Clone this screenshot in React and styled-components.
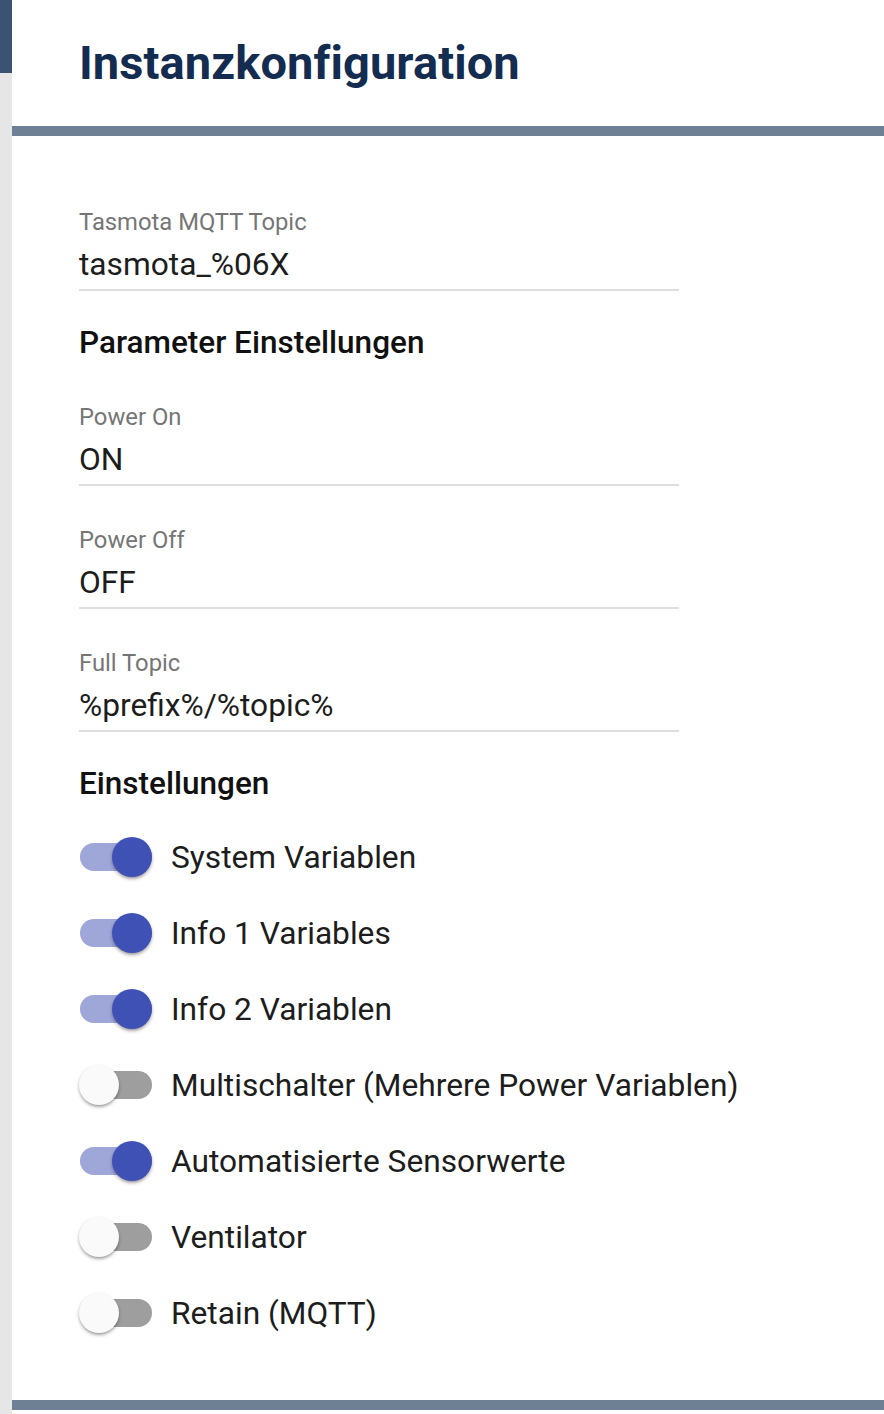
import React from 'react'
import styled, { createGlobalStyle } from 'styled-components'

const GlobalStyle = createGlobalStyle`
  html, body {
    margin: 0;
    padding: 0;
    background: #ffffff;
  }
  body {
    font-family: Roboto, "Liberation Sans", sans-serif;
  }
`

const fields = [
  { label: 'Tasmota MQTT Topic', value: 'tasmota_%06X' },
]

const params = [
  { label: 'Power On', value: 'ON' },
  { label: 'Power Off', value: 'OFF' },
  { label: 'Full Topic', value: '%prefix%/%topic%' },
]

const switches = [
  { text: 'System Variablen', on: true },
  { text: 'Info 1 Variables', on: true },
  { text: 'Info 2 Variablen', on: true },
  { text: 'Multischalter (Mehrere Power Variablen)', on: false },
  { text: 'Automatisierte Sensorwerte', on: true },
  { text: 'Ventilator', on: false },
  { text: 'Retain (MQTT)', on: false },
]

const Page = styled.div`
  display: grid;
  grid-template-columns: 12px 1fr;
  width: 884px;
  height: 1414px;
  overflow: hidden;
`

const Rail = styled.div`
  background: #e6e6e6;
  display: flex;
  flex-direction: column;
`

const RailThumb = styled.div`
  height: 73px;
  background: #3c5272;
`

const Main = styled.div`
  display: flex;
  flex-direction: column;
`

const Header = styled.header`
  height: 126px;
  padding-left: 67px;
  display: flex;
  align-items: center;
  border-bottom: 10px solid #6e8094;
`

const Title = styled.h1`
  margin: 0 0 2px;
  font-size: 47px;
  font-weight: 700;
  color: #132c4f;
  letter-spacing: 0.1px;
`

const Content = styled.div`
  padding: 32px 0 0 67px;
  display: flex;
  flex-direction: column;
  flex: 1;
`

const Field = styled.div`
  width: 600px;
  margin-top: 40px;
  display: flex;
  flex-direction: column;
`

const Label = styled.label`
  font-size: 23.8px;
  line-height: 28px;
  color: #767676;
`

const Value = styled.div`
  margin-top: 4px;
  height: 49px;
  line-height: 50px;
  font-size: 31.7px;
  color: #1d1d1d;
  border-bottom: 2px solid #dedede;
`

const Heading = styled.h2`
  margin: 32px 0 0;
  font-size: 31.5px;
  line-height: 40px;
  font-weight: 500;
  color: #111111;
`

const SwitchList = styled.div`
  margin-top: 15px;
  display: flex;
  flex-direction: column;
`

const SwitchRow = styled.div`
  height: 76px;
  display: flex;
  align-items: center;
  gap: 19px;
`

const Track = styled.span`
  position: relative;
  width: 72px;
  height: 28px;
  margin-left: 1px;
  border-radius: 14px;
  background: ${(p) => (p.$on ? '#9fa6d8' : '#9e9e9e')};
  flex-shrink: 0;
`

const Thumb = styled.span`
  position: absolute;
  top: -6px;
  left: ${(p) => (p.$on ? '32px' : '-1px')};
  width: 40px;
  height: 40px;
  border-radius: 50%;
  background: ${(p) => (p.$on ? '#3f51b5' : '#fafafa')};
  box-shadow: 0 2px 3px rgba(0, 0, 0, 0.2), 0 2px 4px rgba(0, 0, 0, 0.14),
    0 3px 2px -2px rgba(0, 0, 0, 0.12);
`

const SwitchText = styled.span`
  font-size: 31.7px;
  color: #1d1d1d;
`

const BottomBar = styled.div`
  margin-top: auto;
  margin-bottom: 4px;
  height: 10px;
  background: #6e8094;
`

const InputField = ({ label, value }) => (
  <Field>
    <Label>{label}</Label>
    <Value>{value}</Value>
  </Field>
)

const Toggle = ({ text, on }) => (
  <SwitchRow>
    <Track $on={on}>
      <Thumb $on={on} />
    </Track>
    <SwitchText>{text}</SwitchText>
  </SwitchRow>
)

const App = () => (
  <>
    <GlobalStyle />
    <Page>
      <Rail>
        <RailThumb />
      </Rail>
      <Main>
        <Header>
          <Title>Instanzkonfiguration</Title>
        </Header>
        <Content>
          {fields.map((f) => (
            <InputField key={f.label} {...f} />
          ))}
          <Heading>Parameter Einstellungen</Heading>
          {params.map((f) => (
            <InputField key={f.label} {...f} />
          ))}
          <Heading>Einstellungen</Heading>
          <SwitchList>
            {switches.map((s) => (
              <Toggle key={s.text} {...s} />
            ))}
          </SwitchList>
        </Content>
        <BottomBar />
      </Main>
    </Page>
  </>
)

export default App
